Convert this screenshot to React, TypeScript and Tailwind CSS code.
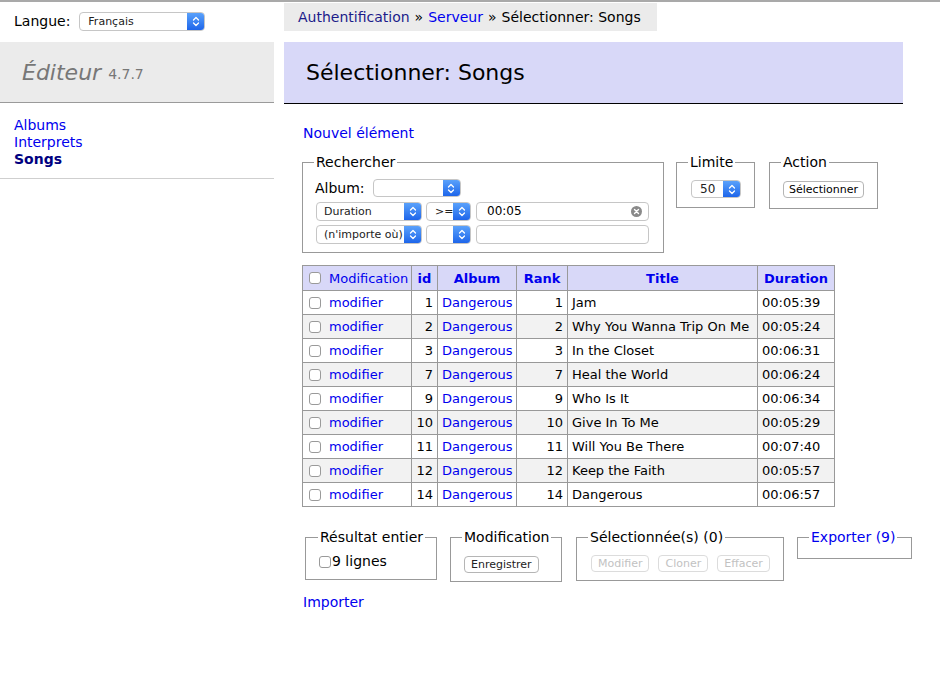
import React from "react";

const Arrows = () => (
  <svg width="8" height="11" viewBox="0 0 8 11" fill="none">
    <path d="M1.5 4 L4 1.5 L6.5 4" stroke="white" strokeWidth="1.3" strokeLinecap="round" strokeLinejoin="round" />
    <path d="M1.5 7 L4 9.5 L6.5 7" stroke="white" strokeWidth="1.3" strokeLinecap="round" strokeLinejoin="round" />
  </svg>
);

const Select = ({ className, children }: { className: string; children?: React.ReactNode }) => (
  <div className={"flex shrink-0 rounded-[4px] border border-[#c6c6c6] bg-white overflow-hidden " + className}>
    <div className="flex-1 flex items-center pl-[7px] text-[11px] text-[#222] whitespace-nowrap overflow-hidden">{children}</div>
    <div className="w-[17px] flex items-center justify-center bg-linear-to-b from-[#5aa1fb] to-[#1e65ea]">
      <Arrows />
    </div>
  </div>
);

const Check = () => (
  <span className="inline-block w-[12px] h-[12px] shrink-0 rounded-[3px] border border-[#9a9a9a] bg-white" />
);

const Btn = ({ children, disabled }: { children: React.ReactNode; disabled?: boolean }) => (
  <span
    className={
      disabled
        ? "inline-flex items-center justify-center h-[17px] px-[6px] rounded-[4px] border border-[#dcdcdc] bg-white text-[11px] text-[#c2c2c2] leading-none"
        : "inline-flex items-center justify-center h-[17px] px-[6px] rounded-[4px] border border-[#b5b5b5] bg-white text-[11px] text-[#222] leading-none"
    }
  >
    {children}
  </span>
);

const rows: [number, number, string, string][] = [
  [1, 1, "Jam", "00:05:39"],
  [2, 2, "Why You Wanna Trip On Me", "00:05:24"],
  [3, 3, "In the Closet", "00:06:31"],
  [7, 7, "Heal the World", "00:06:24"],
  [9, 9, "Who Is It", "00:06:34"],
  [10, 10, "Give In To Me", "00:05:29"],
  [11, 11, "Will You Be There", "00:07:40"],
  [12, 12, "Keep the Faith", "00:05:57"],
  [14, 14, "Dangerous", "00:06:57"],
];

export default function App() {
  return (
    <div className="w-[940px] h-[682px] bg-white font-['DejaVu_Sans',Verdana,sans-serif] text-[14px] text-black leading-[17px] overflow-hidden">
      <div className="h-[2px] bg-[#a9a9a9]" />
      <div className="flex">
        {/* Sidebar */}
        <div className="w-[274px] shrink-0">
          <div className="flex items-center pl-[14px] pt-[9px] h-[29px]">
            <span>Langue:</span>
            <Select className="ml-[9px] w-[126px] h-[19px]">
              <span className="pl-[1px]">Français</span>
            </Select>
          </div>
          <div className="mt-[11px] h-[61px] bg-[#ebebeb] border-b border-[#9a9a9a] flex items-center pl-[22px]">
            <span className="italic text-[22px] text-[#777] leading-[26px] mt-[1px]">Éditeur</span>
            <span className="ml-[7px] text-[14px] text-[#777] mt-[5px]">4.7.7</span>
          </div>
          <div className="pt-[14px] pb-[10px] pl-[14px] border-b border-[#cfcfcf] flex flex-col">
            <span className="text-[#0000ee]">Albums</span>
            <span className="text-[#0000ee]">Interprets</span>
            <span className="font-bold text-[#000080]">Songs</span>
          </div>
        </div>

        {/* Main */}
        <div className="ml-[10px] flex-1">
          <div className="mt-[1px] inline-flex items-center h-[28px] px-[14px] pr-[16px] bg-[#ebebeb]">
            <span className="text-[#1c1c8a]">Authentification</span>
            <span className="mx-[5px]">»</span>
            <span className="text-[#0000ee]">Serveur</span>
            <span className="mx-[5px]">»</span>
            <span>Sélectionner: Songs</span>
          </div>
          <div className="mt-[11px] w-[619px] h-[62px] bg-[#d8d8f8] border-b border-black flex items-center pl-[22px]">
            <span className="text-[22px] leading-[26px] mt-[1px]">Sélectionner: Songs</span>
          </div>

          <div className="mt-[21px] pl-[19px] text-[#0000ee]">Nouvel élément</div>

          <div className="mt-[12px] ml-[18px] flex items-start">
            <fieldset className="w-[362px] border border-[#999] pl-[11px] pr-[13px] pb-[8px]">
              <legend className="px-[2px]">Rechercher</legend>
              <div className="flex items-center h-[20px] mt-[7px]">
                <span className="ml-[1px]">Album:</span>
                <Select className="ml-[8px] w-[88px] h-[18px]" />
              </div>
              <div className="flex items-center mt-[4px] pl-[2px] gap-[4px]">
                <Select className="w-[106px] h-[19px]">Duration</Select>
                <Select className="w-[45px] h-[19px]">
                  <span className="pl-[1px]">&gt;=</span>
                </Select>
                <div className="ml-[1px] w-[173px] h-[19px] rounded-[4px] border border-[#c6c6c6] bg-white flex items-center pl-[10px] pr-[6px] text-[12px]">
                  <span className="flex-1">00:05</span>
                  <svg width="11" height="11" viewBox="0 0 11 11">
                    <circle cx="5.5" cy="5.5" r="5.5" fill="#8a8a8a" />
                    <path d="M3.5 3.5 L7.5 7.5 M7.5 3.5 L3.5 7.5" stroke="white" strokeWidth="1.4" strokeLinecap="round" />
                  </svg>
                </div>
              </div>
              <div className="flex items-center mt-[4px] pl-[2px] gap-[4px]">
                <Select className="w-[106px] h-[19px]">(n'importe où)</Select>
                <Select className="w-[45px] h-[19px]" />
                <div className="ml-[1px] w-[173px] h-[19px] rounded-[4px] border border-[#c6c6c6] bg-white" />
              </div>
            </fieldset>

            <fieldset className="ml-[12px] w-[79px] border border-[#999] pl-[11px] pb-[9px]">
              <legend className="px-[2px]">Limite</legend>
              <Select className="mt-[9px] ml-[3px] w-[50px] h-[18px]">
                <span className="pl-[1px] text-[12px]">50</span>
              </Select>
            </fieldset>

            <fieldset className="ml-[14px] w-[109px] border border-[#999] pl-[11px] pb-[10px]">
              <legend className="px-[2px]">Action</legend>
              <div className="mt-[9px] ml-[2px]">
                <span className="inline-flex items-center justify-center h-[17px] w-[81px] rounded-[4px] border border-[#b5b5b5] bg-white text-[11px] leading-none">
                  Sélectionner
                </span>
              </div>
            </fieldset>
          </div>

          <table className="mt-[12px] ml-[18px] border-collapse table-fixed text-[13px]">
            <colgroup>
              <col className="w-[109px]" />
              <col className="w-[26px]" />
              <col className="w-[79px]" />
              <col className="w-[51px]" />
              <col className="w-[190px]" />
              <col className="w-[77px]" />
            </colgroup>
            <thead>
              <tr className="h-[25px] bg-[#d8d8f8] text-[#0000ee]">
                <th className="border border-[#999] pl-[6px] text-left font-normal">
                  <div className="flex items-center gap-[8px]">
                    <Check />
                    <span>Modification</span>
                  </div>
                </th>
                <th className="border border-[#999] font-bold">id</th>
                <th className="border border-[#999] font-bold">Album</th>
                <th className="border border-[#999] font-bold">Rank</th>
                <th className="border border-[#999] font-bold">Title</th>
                <th className="border border-[#999] font-bold">Duration</th>
              </tr>
            </thead>
            <tbody>
              {rows.map(([id, rank, title, dur], i) => (
                <tr key={id} className={i % 2 === 1 ? "h-[24px] bg-[#f2f2f2]" : "h-[24px] bg-white"}>
                  <td className="border border-[#999] pl-[6px]">
                    <div className="flex items-center gap-[8px]">
                      <Check />
                      <span className="text-[#0000ee] -mt-[1px]">modifier</span>
                    </div>
                  </td>
                  <td className="border border-[#999] text-right pr-[4px]">{id}</td>
                  <td className="border border-[#999] pl-[4px] text-[#0000ee]">Dangerous</td>
                  <td className="border border-[#999] text-right pr-[4px]">{rank}</td>
                  <td className="border border-[#999] pl-[4px] whitespace-nowrap">{title}</td>
                  <td className="border border-[#999] pl-[4px]">{dur}</td>
                </tr>
              ))}
            </tbody>
          </table>

          <div className="mt-[22px] ml-[21px] flex items-start">
            <fieldset className="w-[132px] border border-[#999] pl-[12px] pb-[9px]">
              <legend className="px-[2px]">Résultat entier</legend>
              <div className="mt-[7px] ml-[1px] flex items-center">
                <Check />
                <span className="ml-[1px]">9 lignes</span>
              </div>
            </fieldset>
            <fieldset className="ml-[13px] w-[112px] border border-[#999] pl-[11px] pb-[8px]">
              <legend className="px-[2px]">Modification</legend>
              <div className="mt-[9px] ml-[2px]">
                <Btn>Enregistrer</Btn>
              </div>
            </fieldset>
            <fieldset className="ml-[14px] w-[208px] border border-[#999] pl-[11px] pb-[8px]">
              <legend className="px-[2px]">Sélectionnée(s) (0)</legend>
              <div className="mt-[9px] ml-[3px] flex gap-[9px]">
                <Btn disabled>Modifier</Btn>
                <Btn disabled>Cloner</Btn>
                <Btn disabled>Effacer</Btn>
              </div>
            </fieldset>
            <fieldset className="ml-[13px] w-[115px] h-[30px] border border-[#999] pl-[11px]">
              <legend className="px-[2px] text-[#0000ee]">Exporter (9)</legend>
            </fieldset>
          </div>

          <div className="mt-[12px] pl-[19px] text-[#0000ee]">Importer</div>
        </div>
      </div>
    </div>
  );
}
